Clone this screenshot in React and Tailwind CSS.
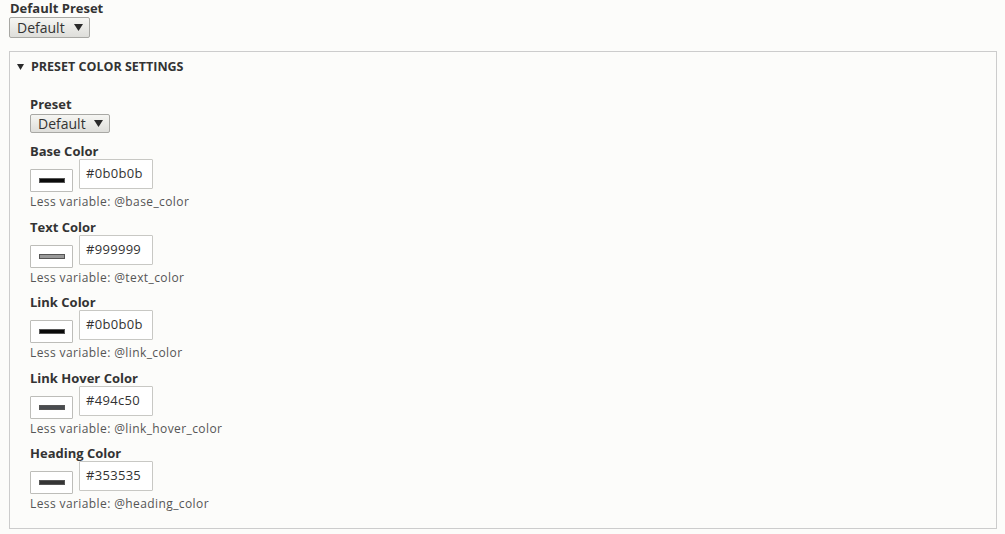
import React from 'react';

const COLORS = [
    { label: 'Base Color', value: '#0b0b0b', variable: '@base_color' },
    { label: 'Text Color', value: '#999999', variable: '@text_color' },
    { label: 'Link Color', value: '#0b0b0b', variable: '@link_color' },
    { label: 'Link Hover Color', value: '#494c50', variable: '@link_hover_color' },
    { label: 'Heading Color', value: '#353535', variable: '@heading_color' },
];

const Caret = ({ w, h, className }) => (
    <svg width={w} height={h} viewBox={`0 0 ${w} ${h}`} className={className}>
        <polygon points={`0,0 ${w},0 ${w / 2},${h}`} fill="#2a2a2a" />
    </svg>
);

const Select = ({ value, big }) => (
    <div
        className={`inline-flex items-center border border-[#a8a8a4] rounded-[2px] bg-gradient-to-b from-[#f6f6f3] to-[#dededa] text-[#333] pl-[7px] text-[14px] ${
            big ? 'h-[21px] w-[81px]' : 'h-[19px] w-[80px]'
        }`}
    >
        <span className="leading-none">{value}</span>
        <Caret w={9} h={7} className="ml-auto mr-[6px]" />
    </div>
);

const ColorField = ({ label, value, variable }) => (
    <div className="mb-[10.5px]">
        <div className="text-[13px] font-bold leading-[15px] text-[#333]">{label}</div>
        <div className="flex items-start h-[33px]">
            <div className="mt-[10px] w-[43px] h-[23px] border border-[#bdbdb9] bg-white flex items-center justify-center rounded-[1px]">
                <div className="w-[26px] h-[5px] border border-[#555] ml-[1px]" style={{ backgroundColor: value }} />
            </div>
            <div className="ml-[6px] w-[74px] h-[30px] border border-[#c8c8c4] bg-white rounded-[1px] flex items-center pl-[6px] text-[13px] text-[#333] tracking-[0.3px]">
                {value}
            </div>
        </div>
        <div className="mt-[3px] text-[12px] leading-[14px] text-[#555] tracking-[0.4px]">
            Less variable: {variable}
        </div>
    </div>
);

const App = () => {
    return (
        <div className="min-h-screen bg-[#fcfcfa] text-[#333]" style={{ fontFamily: '"Open Sans", "Noto Sans", sans-serif' }}>
            <div className="pt-[1px] pl-[10px] pr-[8px]">
                {/* Default preset */}
                <div className="text-[13px] font-bold leading-[15px] text-[#333]">Default Preset</div>
                <div className="-ml-[1px] mt-[1px] flex">
                    <Select value="Default" big />
                </div>

                {/* Fieldset */}
                <div className="-ml-[1px] mt-[13px] border border-[#ccc] h-[478px]">
                    <div className="flex items-center pl-[7px] pt-[7px] h-[23px]">
                        <Caret w={7} h={6} />
                        <span className="ml-[7px] text-[12.5px] font-bold uppercase leading-[16px] text-[#333]">
                            Preset Color Settings
                        </span>
                    </div>

                    <div className="pl-[20px] pt-[22px]">
                        <div className="text-[13px] font-bold leading-[15px] text-[#333]">Preset</div>
                        <div className="mt-[2px] mb-[11px] flex">
                            <Select value="Default" />
                        </div>

                        {COLORS.map(c => (
                            <ColorField key={c.variable} {...c} />
                        ))}
                    </div>
                </div>
            </div>
        </div>
    );
};

export default App;
